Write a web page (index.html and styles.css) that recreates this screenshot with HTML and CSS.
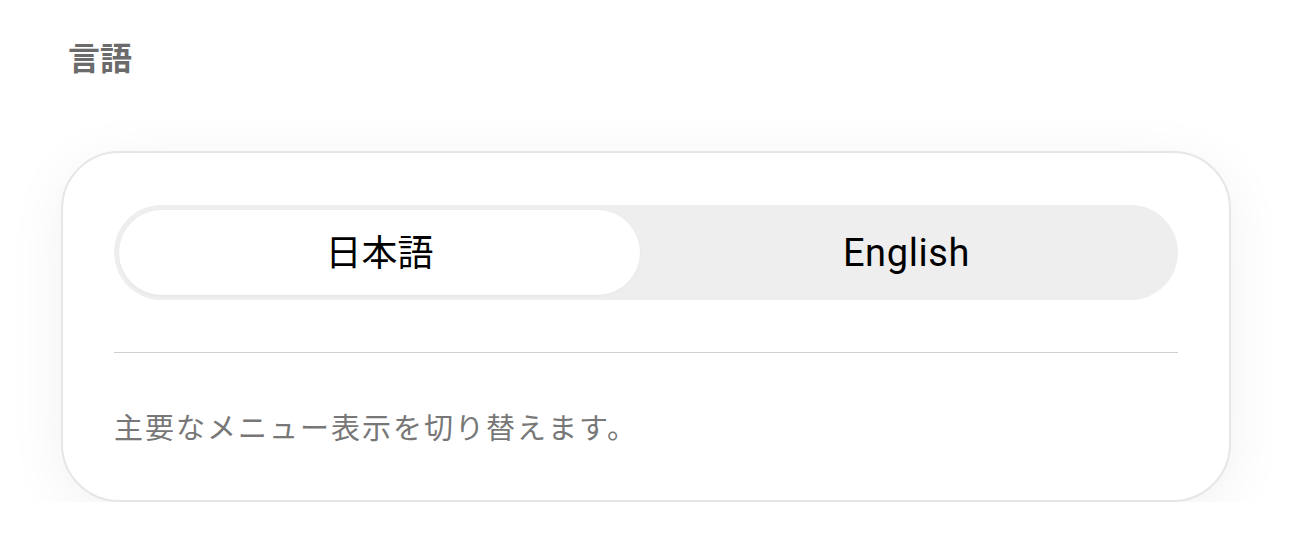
FILE: index.html
```html
<!DOCTYPE html>
<html lang="ja">
<head>
    <meta charset="UTF-8">
    <meta name="viewport" content="width=device-width, initial-scale=1.0">
    <title>言語</title>
    <link rel="stylesheet" href="styles.css">
</head>
<body>
    <section class="settings">
        <h2 class="section-title">言語</h2>

        <div class="card">
            <div class="segmented">
                <button class="segment active">日本語</button>
                <button class="segment">English</button>
            </div>

            <hr class="divider">

            <p class="hint">主要なメニュー表示を切り替えます。</p>
        </div>
    </section>
</body>
</html>
```

FILE: styles.css
```css
body {
    margin: 0;
    background-color: #ffffff;
    font-family: "Noto Sans CJK JP", "Noto Sans", sans-serif;
    color: #000;
}
.settings {
    padding: 36px 61px 0 61px;
}
.section-title {
    margin: 0 0 75px 7px;
    font-size: 32px;
    line-height: 40px;
    font-weight: 700;
    color: #6b6b6b;
}
.card {
    width: 1064px;
    background-color: #fff;
    border: 2px solid #e6e6e6;
    border-radius: 58px;
    padding: 52px 51px 54px 51px;
    box-shadow: 0 12px 60px rgba(0,0,0,0.06);
}
.segmented {
    display: grid;
    grid-template-columns: 521px 1fr;
    height: 95px;
    box-sizing: border-box;
    padding: 5px;
    background-color: #eeeeef;
    border-radius: 48px;
}
.segment {
    border: none;
    background: none;
    border-radius: 43px;
    font-family: Roboto, "Noto Sans CJK JP", sans-serif;
    font-size: 38px;
    line-height: 1;
    letter-spacing: 0.6px;
    color: #000;
    cursor: pointer;
}
.segment.active {
    background-color: #fff;
    font-family: "Noto Sans CJK JP", sans-serif;
    font-size: 36px;
    letter-spacing: 0;
    padding-bottom: 6px;
    box-shadow: 0 1px 3px rgba(0,0,0,0.04);
}
.divider {
    margin: 52px 0 0 0;
    border: none;
    border-top: 1px solid #d0d0d0;
}
.hint {
    margin: 53px 0 0 0;
    font-size: 29px;
    line-height: 40px;
    letter-spacing: 2px;
    color: #777;
}
```
